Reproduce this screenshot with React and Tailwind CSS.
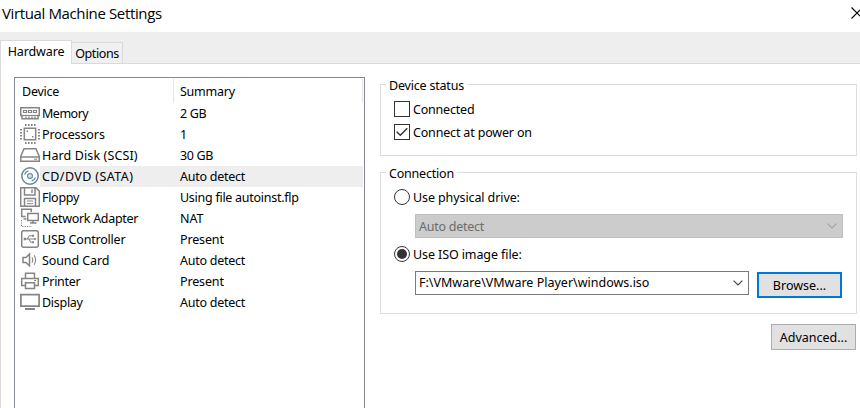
import React from "react";

const svgProps = {
  width: 20,
  height: 20,
  viewBox: "0 0 20 20",
  fill: "none",
  stroke: "#858585",
  strokeWidth: 1.5,
  className: "shrink-0",
};

function MemoryIcon() {
  return (
    <svg {...svgProps}>
      <path d="M0.7 4.7H19.3V12.5H18V15.8H2V12.5H0.7Z" />
      <path d="M3.5 7.5H6.5V9.5H3.5ZM8.5 7.5H11.5V9.5H8.5ZM13.5 7.5H16.5V9.5H13.5Z" strokeWidth="1.2" />
      <path d="M2 12.5H18" strokeWidth="1.2" />
      <path d="M5 14.2H16" strokeDasharray="2 1" strokeWidth="1" />
    </svg>
  );
}

function ProcessorIcon() {
  return (
    <svg {...svgProps}>
      <path d="M4.3 4.3H15.7V15.7H4.3Z" />
      <path d="M5 1H16M5 19H16" strokeDasharray="1.6 1.4" strokeWidth="2" />
      <path d="M1 5V16M19 5V16" strokeDasharray="1.6 1.4" strokeWidth="2" />
      <path d="M6.5 7.2H8M12 12.8H13.5" strokeWidth="1.5" />
    </svg>
  );
}

function HardDiskIcon() {
  return (
    <svg {...svgProps}>
      <path d="M0.7 11.5L4 3.7H16L19.3 11.5V16.3H0.7Z" />
      <path d="M0.7 12H19.3" />
      <path d="M14 14.2H17" strokeWidth="1" />
    </svg>
  );
}

function DiscIcon() {
  return (
    <svg {...svgProps} stroke="#64879b">
      <circle cx="10" cy="10" r="8.2" />
      <circle cx="10" cy="10" r="2.4" strokeWidth="1.2" />
      <circle cx="10" cy="10" r="0.6" fill="#64879b" stroke="none" />
      <path d="M4.6 8.6A5.5 5.5 0 0 1 8.4 4.8M11.6 15.2A5.5 5.5 0 0 0 15.4 11.4" strokeWidth="1.2" />
    </svg>
  );
}

function FloppyIcon() {
  return (
    <svg {...svgProps}>
      <path d="M0.7 0.7H16L19.3 4V19.3H0.7Z" />
      <path d="M4.5 1V8H15V1" />
      <path d="M12 2.5V6" />
      <path d="M4.5 19V11.5H15.5V19" />
      <path d="M7 14H13M7 16.7H13" strokeWidth="1" />
    </svg>
  );
}

function NetworkIcon() {
  return (
    <svg {...svgProps}>
      <path d="M11.3 4V1.3H1.7V8.5H5.7M3.5 11H6.5" />
      <path d="M7.7 5.5H18.3V12.5H7.7ZM13 12.5V15M10 15H16.5" />
      <path d="M1.5 12V18.5H12" strokeDasharray="1.2 1.2" strokeWidth="1.1" />
    </svg>
  );
}

function UsbIcon() {
  return (
    <svg {...svgProps}>
      <rect x="1.7" y="1.7" width="16.6" height="16.6" rx="2" />
      <path d="M4 10H15.5M7 10L9.5 6.7H12M8.5 10L11 13.3H12.5" strokeWidth="1.1" />
      <path d="M3.7 8.7H6V11.3H3.7ZM12 5.7H14V7.7H12ZM12 12.3H14V14.3H12ZM14.3 8.5L16.5 10L14.3 11.5Z" fill="#858585" stroke="none" />
    </svg>
  );
}

function SoundIcon() {
  return (
    <svg {...svgProps}>
      <path d="M3 7.5H6L9.5 4V15.8L6 12.5H3Z" />
      <path d="M12 7.4Q13.6 10 12 12.8M14.2 5.4Q17 10 14.2 14.7" strokeWidth="1.1" />
    </svg>
  );
}

function PrinterIcon() {
  return (
    <svg {...svgProps}>
      <path d="M5.5 7V2.2H14.5V7M5.5 14.5H1.7V7.5H18.3V14.5H14.5" />
      <path d="M5.5 11.8H14.5V17.5H5.5Z" />
      <path d="M14 9.5H16" strokeWidth="1" />
    </svg>
  );
}

function DisplayIcon() {
  return (
    <svg {...svgProps}>
      <path d="M0.9 2.6H19.1V14.2H0.9Z" strokeWidth="1.7" />
      <path d="M5 17H15" strokeWidth="2" />
    </svg>
  );
}

const devices = [
  { name: "Memory", summary: "2 GB", Icon: MemoryIcon, nameClass: "tracking-[-0.5px]", summaryClass: "tracking-[-0.3px]" },
  { name: "Processors", summary: "1", Icon: ProcessorIcon, nameClass: "tracking-[-0.1px]" },
  { name: "Hard Disk (SCSI)", summary: "30 GB", Icon: HardDiskIcon, nameClass: "tracking-[0.12px]", summaryClass: "tracking-[-0.35px]" },
  { name: "CD/DVD (SATA)", summary: "Auto detect", Icon: DiscIcon, selected: true, nameClass: "tracking-[0.4px]", summaryClass: "tracking-[-0.25px]" },
  { name: "Floppy", summary: "Using file autoinst.flp", Icon: FloppyIcon, nameClass: "tracking-[-0.3px]", summaryClass: "tracking-[-0.27px]" },
  { name: "Network Adapter", summary: "NAT", Icon: NetworkIcon, nameClass: "tracking-[-0.3px]" },
  { name: "USB Controller", summary: "Present", Icon: UsbIcon, nameClass: "tracking-[-0.2px]", summaryClass: "tracking-[-0.15px]" },
  { name: "Sound Card", summary: "Auto detect", Icon: SoundIcon, nameClass: "tracking-[-0.1px]", summaryClass: "tracking-[-0.25px]" },
  { name: "Printer", summary: "Present", Icon: PrinterIcon, nameClass: "tracking-[-0.28px]", summaryClass: "tracking-[-0.15px]" },
  { name: "Display", summary: "Auto detect", Icon: DisplayIcon, nameClass: "tracking-[-0.28px]", summaryClass: "tracking-[-0.25px]" },
];

function TitleBar() {
  return (
    <header className="flex h-8 shrink-0 items-start justify-between bg-white pl-[2px]">
      <h1 className="font-['Open_Sans',sans-serif] text-[15px] leading-[27px] tracking-[-0.37px]">
        Virtual Machine Settings
      </h1>
      <svg width="9" height="12" viewBox="0 0 9 12" className="mt-[7px]" fill="none" stroke="#000" strokeWidth="1.1">
        <path d="M0.5 0.5L12 12M0.5 11.5L12 0" />
      </svg>
    </header>
  );
}

function Tabs() {
  return (
    <nav className="flex h-8 shrink-0 items-end bg-[#eeeeee]">
      <button className="flex h-6 w-[72px] items-center justify-center border border-b-0 border-[#d9d9d9] bg-white pb-[1px] tracking-[-0.12px]">
        Hardware
      </button>
      <button className="flex h-[22px] w-[51px] items-center justify-center border border-l-0 border-[#d9d9d9] bg-[#f0f0f0] pt-[2px] tracking-[-0.4px]">
        Options
      </button>
      <div className="h-px flex-1 bg-[#d9d9d9]" />
    </nav>
  );
}

function DeviceList() {
  return (
    <section className="ml-[13px] mt-[13px] w-[351px] border border-b-0 border-[#828790] bg-white px-px pt-px">
      <div className="flex h-6 tracking-[-0.25px]">
        <div className="flex w-[158px] items-center border-r border-[#e5e5e5] pl-[6px] pt-[2px]">Device</div>
        <div className="flex flex-1 items-center border-r border-[#e5e5e5] pl-[6px] pt-[2px]">Summary</div>
      </div>
      {devices.map(({ name, summary, Icon, selected, nameClass, summaryClass }) => (
        <div key={name} className="flex h-[21px] pl-1">
          <Icon />
          <div className={selected ? "flex flex-1 items-center bg-[#eeeeee] pl-[2px]" : "flex flex-1 items-center pl-[2px]"}>
            <div className="w-[138px]">
              <span className={nameClass}>{name}</span>
            </div>
            <span className={summaryClass}>{summary}</span>
          </div>
        </div>
      ))}
    </section>
  );
}

function Group({ title, className, children }) {
  return (
    <div className={className}>
      <div className="flex h-[18px] items-center">
        <span className="mt-[8px] h-[10px] w-[6px] border-l border-t border-[#dcdcdc]" />
        <span className="px-[3px] pt-[2px] tracking-[-0.2px]">{title}</span>
        <span className="mt-[8px] h-[10px] flex-1 border-r border-t border-[#dcdcdc]" />
      </div>
      <div className="flex-1 border border-t-0 border-[#dcdcdc] pl-[13px]">{children}</div>
    </div>
  );
}

function Checkbox({ label, labelClass, checked }) {
  return (
    <label className="flex h-4 items-center gap-[3px]">
      <span className="flex size-4 items-center justify-center border border-[#333]">
        {checked && (
          <svg width="12" height="10" viewBox="0 0 12 10" fill="none" stroke="#333" strokeWidth="1.4">
            <path d="M0.7 4.7L4.3 8.3L11.3 1.2" />
          </svg>
        )}
      </span>
      <span className={labelClass}>{label}</span>
    </label>
  );
}

function Radio({ label, checked }) {
  return (
    <label className="flex h-4 items-center gap-[3px]">
      <span className="flex size-4 items-center justify-center rounded-full border border-[#333]">
        {checked && <span className="size-[10px] rounded-full bg-[#333]" />}
      </span>
      <span className="pt-[2px] tracking-[-0.1px]">{label}</span>
    </label>
  );
}

function Chevron({ color }) {
  return (
    <svg width="10" height="6" viewBox="0 0 10 6" fill="none" stroke={color} strokeWidth="1.1">
      <path d="M0.6 0.6L5 5L9.4 0.6" />
    </svg>
  );
}

export default function App() {
  return (
    <div className="flex h-[408px] w-[860px] flex-col overflow-hidden bg-white font-['Noto_Sans',sans-serif] text-[12.5px] leading-4 text-black">
      <TitleBar />
      <Tabs />
      <main className="flex flex-1 items-stretch border-l border-[#d9d9d9]">
        <DeviceList />
        <section className="ml-[15px] mt-3 flex w-[477px] flex-col">
          <Group title="Device status" className="flex h-[80px] flex-col">
            <div className="flex flex-col gap-[7px] pt-[7px]">
              <Checkbox label="Connected" labelClass="pt-[2px] tracking-[-0.2px]" />
              <Checkbox label="Connect at power on" labelClass="pt-[2px] tracking-[-0.17px]" checked />
            </div>
          </Group>
          <Group title="Connection" className="mt-[8px] flex h-[150px] flex-col">
            <div className="pt-[7px]">
              <Radio label="Use physical drive:" />
              <div className="ml-[21px] mt-[9px] flex h-6 w-[428px] items-center justify-between border border-[#bfbfbf] bg-[#cccccc] pl-[3px] pr-[5px] text-[#6d6d6d]">
                <span className="pt-[2px] tracking-[-0.25px]">Auto detect</span>
                <Chevron color="#a0a0a0" />
              </div>
              <div className="mt-2">
                <Radio label="Use ISO image file:" checked />
              </div>
              <div className="ml-[21px] mt-[9px] flex">
                <div className="flex h-6 w-[334px] items-center justify-between border border-[#7a7a7a] bg-white pl-[3px] pr-[5px]">
                  <span>F:\VMware\VMware Player\windows.iso</span>
                  <Chevron color="#404040" />
                </div>
                <button className="ml-2 mt-px flex h-[26px] w-[85px] items-center justify-center border-2 border-[#0078d7] bg-[#e1e1e1] pt-[2px]">
                  Browse...
                </button>
              </div>
            </div>
          </Group>
          <button className="mr-px mt-[10px] flex h-[26px] w-[85px] items-center justify-center self-end border border-[#adadad] bg-[#e1e1e1] pt-[2px]">
            Advanced...
          </button>
        </section>
      </main>
    </div>
  );
}
